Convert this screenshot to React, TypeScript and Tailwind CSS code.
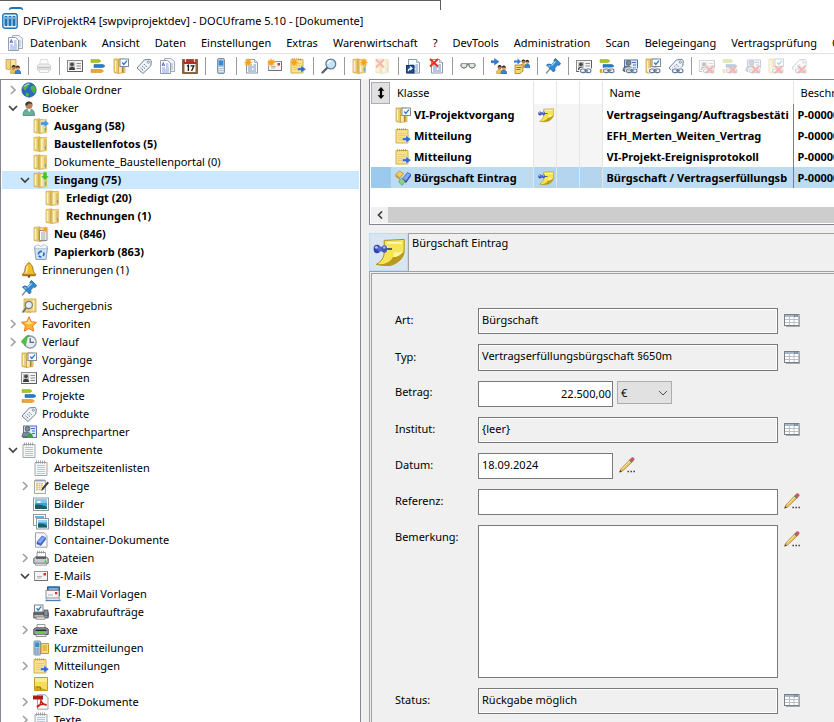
import type { ReactNode } from "react";

type IconProps = { name: string; faded?: boolean; size?: string };

// Base shapes, all on a 16x16 grid

const folder = (
  <>
    <path d="M1 1.500 7 .8V15.500L1 14.500z" fill="#e8ca72" stroke="#c9a548" strokeWidth=".7" />
    <path d="M7 1.500h6.500v13l-6.500 1z" fill="#f1d986" stroke="#cfae55" strokeWidth=".7" />
    <path d="M2.500 2.500v11M8.700 3v11" stroke="#fbf2c8" strokeWidth="1.600" />
    <path d="M5.500 2v12.500M12 3v6" stroke="#d5b04e" strokeWidth="1.200" />
    <path d="M12.300 9.500v4" stroke="#5aa5dc" strokeWidth="1.300" />
  </>
);

const star = (
  <path d="m11.5 0 .9 2.3L14.800 1.400l-.9 2.2 2.100.9-2.100.9.9 2.200-2.300-.9-.9 2.100-.9-2.100-2.300.9.9-2.200L7.600 4.500l2.100-.9-.9-2.200 2.300.9z" fill="#f9a11b" stroke="#fbd27a" strokeWidth=".4" />
);

const starLeft = <g transform="translate(-7.500 0)">{star}</g>;

const link = (
  <g fill="none" stroke="#fff" strokeWidth="2.800">
    <rect x="4.500" y="11" width="5.500" height="3.600" rx="1.800" />
    <rect x="9.500" y="11" width="5.500" height="3.600" rx="1.800" />
    <g stroke="#5f7796" strokeWidth="1.200">
      <rect x="4.500" y="11" width="5.500" height="3.600" rx="1.800" />
      <rect x="9.500" y="11" width="5.500" height="3.600" rx="1.800" />
      <path d="M8 12.800h4" />
    </g>
  </g>
);

const cross = <path d="m7 8 7.500 7M14.500 8 7 15" stroke="#e8301c" strokeWidth="2.200" fill="none" />;

const card = (
  <>
    <rect x=".5" y="2.500" width="15" height="11" fill="#f3f3f3" stroke="#8b8b8b" />
    <path d="M.5 13.500h15v-11" stroke="#5e5e5e" fill="none" />
    <rect x="2" y="4" width="6" height="8" fill="#c4c4c4" />
    <circle cx="5" cy="6.300" r="1.900" fill="#4b4b4b" />
    <path d="M2 12c0-2.600 1.400-3.300 3-3.300S8 9.400 8 12z" fill="#3d3d3d" />
    <path d="M9.500 5.500H14M9.500 8H14M9.500 10.500H14" stroke="#8f8f8f" />
  </>
);

const bars = (
  <>
    <path d="M1 1.500h8l2 1.500-2 1.500H1z" fill="#a5c71f" stroke="#8aa619" strokeWidth=".5" />
    <path d="M4 6.500h9L15 8l-2 1.500H4z" fill="#1f7ccb" stroke="#15609f" strokeWidth=".5" />
    <path d="M1 11.500h10.500l2 1.500-2 1.500H1z" fill="#eda33a" stroke="#c9811f" strokeWidth=".5" />
  </>
);

const folderCheck = (
  <>
    <path d="M1 1h4.500v14.500L1 14.500z" fill="#e8ca72" stroke="#c49b3c" strokeWidth=".7" />
    <path d="M5.500 1H12v13.500l-6.500 1z" fill="#f3dc8d" stroke="#c49b3c" strokeWidth=".7" />
    <path d="M2.500 2.500v11M7 9v5.500" stroke="#fbf2c8" strokeWidth="1.300" />
    <path d="M9.800 9v5.500" stroke="#a07a2c" strokeWidth="1.400" />
    <rect x="7" y="1" width="8.500" height="7.500" fill="#fff" stroke="#7c8b98" />
    <path d="m9.300 4.500 1.500 1.900L14 2.600" stroke="#1f7ccb" strokeWidth="1.300" fill="none" />
  </>
);

const tag = (
  <>
    <path d="M1 10 8.500 1.800 14 1.500l1.300 1.200-.5 5.200L7 15.500z" fill="#f1f5f9" stroke="#6d8093" strokeLinejoin="round" />
    <circle cx="12.300" cy="4.200" r="1.100" fill="#fff" stroke="#6d8093" strokeWidth=".8" />
    <path d="m4.500 9.800 3 2.800M6.200 8l3 2.800M8 6.200 10.800 9" stroke="#5a6a7b" strokeDasharray="1.500 .7" />
  </>
);

const sheet = (
  <>
    <path d="M2.500 1.500h8l3 3v10.500h-11z" fill="#fafcff" stroke="#8d97a5" />
    <path d="M10.500 1.500v3h3" fill="#dfe6ef" stroke="#8d97a5" strokeWidth=".7" />
    <path d="M4 7h4M9.500 7H12M4 9h8M4 11h4M9.500 11H12M4 13h8" stroke="#6f8fc8" />
  </>
);

const docs = (
  <>
    <path d="M5.500.5H12l3.500 3v10h-10z" fill="#f2f4f7" stroke="#a5adb8" />
    <path d="M1.500 2.500h7l3 2.500v10.500h-10z" fill="#fdfdff" stroke="#929baa" />
    <path d="m3 8 1.300-3.500L5.600 8M3.500 7h1.700" stroke="#4d5fc0" strokeWidth=".9" fill="none" />
    <path d="M7 6h2.500M7 8h2.500M3 10h3M7 10h3M3 12h7M3 14h7" stroke="#7895cc" strokeWidth=".9" />
    <path d="M13 5v7" stroke="#9db3dc" />
  </>
);

const pad = (
  <>
    <path d="M2 2.500h12v13H2z" fill="#f4f5f5" stroke="#a4a9ad" />
    <path d="M3.500 .5v3M5.500 .5v3M7.500 .5v3M9.500 .5v3M11.500 .5v3" stroke="#8a8f93" strokeWidth=".8" />
    <path d="M4 5.500h8M4 7.500h8M4 9.500h8M4 11.500h8M4 13.500h8" stroke="#b3c9d8" />
  </>
);

const note = (
  <>
    <path d="M1 1.500h12v13.500H1z" fill="#f8e28c" stroke="#d2ae43" />
    <path d="M2.500 .3v2M4.500 .3v2M6.500 .3v2M8.500 .3v2M10.500 .3v2" stroke="#b0913c" strokeWidth=".8" />
    <path d="M3 5.500h8M3 7.500h8M3 9.500h4M3 11.500h4" stroke="#e6cc78" />
    <path d="M7.500 9.800H11V7.300L16 11.200 11 15v-2.500H7.500z" fill="#2f6bd0" stroke="#fff" strokeWidth=".4" />
  </>
);

const mail = (
  <>
    <rect x="1.500" y="3.500" width="13" height="9" fill="#f4f4f4" stroke="#979797" />
    <path d="M1.500 12.500h13v-9" stroke="#707070" fill="none" />
    <rect x="10.500" y="5" width="2.500" height="2.500" fill="#d8342a" />
    <path d="M4 8.500h5M4 10h4" stroke="#b5b5b5" />
  </>
);

const people = (
  <>
    <circle cx="7" cy="8" r="2.300" fill="#b87a4a" />
    <path d="M4.500 8c0-4 5-4 5 0-1-1.500-3-2-5 0z" fill="#22180f" />
    <path d="M3 15c0-4 2-4.700 4-4.700s3 1 3 4.700z" fill="#edc34d" stroke="#a5771d" strokeWidth=".5" />
    <circle cx="12" cy="8.800" r="2.200" fill="#d79a68" />
    <path d="M9.500 8.500c0-4 5-4 5 .5-1-1.500-3-2-5-.5z" fill="#33210f" />
    <path d="M8.500 15.700c0-4 1.700-4.700 3.500-4.700s3.700.7 3.700 4.700z" fill="#3c82da" stroke="#20589f" strokeWidth=".5" />
  </>
);

const printer = (
  <>
    <path d="M4.500 1.500h7l1 6h-9z" fill="#fafafa" stroke="#a0a0a0" />
    <path d="M1.500 7.500 3 6h10l1.500 1.500V12h-13z" fill="#cfd2d4" stroke="#707478" />
    <path d="M2 9.500h12" stroke="#44484c" strokeWidth="1.500" />
    <path d="M3.500 11.500h9v3h-9z" fill="#f0f0f0" stroke="#8b8f93" />
  </>
);

const pin = (
  <>
    <path d="m1 15.500 5-6" stroke="#8996a3" strokeWidth="1.500" />
    <path d="M1.500 7 8.500 14l1.500-1.700-.3-2.400 2.800-2.800 1.700.2L15.600 5.500 10.500.4 9 2l.2 1.900-2.900 2.700L3.500 6z" fill="#3488cf" stroke="#19619f" strokeWidth=".8" strokeLinejoin="round" />
    <path d="m6.500 7.500 4-4M3.500 7.500l1.500 1" stroke="#a9d7f7" strokeWidth="1.300" />
  </>
);

const contact = (
  <>
    <rect x="2.500" y="2" width="13" height="11.500" fill="#dce9f8" stroke="#5775a5" />
    <path d="M10 4.500h4M11 7h3M11 9.500h3" stroke="#4877be" />
    <circle cx="6.500" cy="4.800" r="2.500" fill="#7e8992" stroke="#434b52" strokeWidth=".6" />
    <path d="M1 13c0-4 2-5 4.500-5S10 9 10 13z" fill="#7b8b98" stroke="#35424d" strokeWidth=".6" />
    <path d="M6 14c0-3 1.500-4.500 3.500-4.500 1.700 0 2.500 1.500 2.500 4.500z" fill="#3e9f42" />
  </>
);

const stickyPin = (
  <>
    <path d="M5.600 2.200 15.600 1.700V7.500c-.2 3-2 5-5 6.500-2.700 1.200-5.500.8-9 .2C4.300 12.800 5.600 10.500 5.600 8z" fill="#f6e456" stroke="#a8901e" strokeWidth=".5" />
    <path d="M15.600 7c-.2 3.500-2 5.500-5 7-2.700 1.200-5.500.8-9 .2 4.200.2 7-1 8.400-3.700 2 .3 4-.9 5.600-3.500z" fill="#b89a1c" />
    <path d="M15.300 7.500c-1.500 2-3.300 3-5.300 2.800.5-.8.700-1.500.6-2.300 1.700.3 3.200 0 4.700-.5z" fill="#fdf6a4" />
    <path d="M7 3.400h7.500M7 5v2.500" stroke="#fff9bb" strokeWidth=".9" />
    <path d="M6.500 6.500H9.500" stroke="#3b4a86" strokeWidth=".9" />
    <ellipse cx="2" cy="6.500" rx="1.700" ry="2.100" fill="#2f44ac" />
    <ellipse cx="3.700" cy="6.500" rx="1.500" ry="1.300" fill="#5168d0" />
    <ellipse cx="5.700" cy="6.500" rx="1.400" ry="1.900" fill="#4058c4" />
    <ellipse cx="1.700" cy="5.700" rx=".8" ry=".7" fill="#b3c0f8" />
    <ellipse cx="5.600" cy="5.700" rx=".6" ry=".6" fill="#b3c0f8" />
  </>
);

const icons: Record<string, ReactNode> = {
  folder,
  card,
  bars,
  folderCheck,
  tag,
  docs,
  pad,
  note,
  mail,
  pin,
  contact,
  stickyPin,
  printer,
  logo: (
    <>
      <rect x=".8" y=".8" width="14.400" height="14.400" rx="2" fill="#e3f1fa" stroke="#1e73b4" strokeWidth="1.400" />
      <g fill="#1e73b4">
        <rect x="2.500" y="3" width="3" height="10" rx=".8" />
        <rect x="6.500" y="3" width="3" height="10" rx=".8" />
        <rect x="10.500" y="3" width="3" height="10" rx=".8" />
      </g>
      <path d="M4 4v2M8 4v2M12 4v2" stroke="#cde5f5" />
    </>
  ),
  users: (
    <>
      <path d="M1 1.500h4.500V12L1 11z" fill="#efd279" stroke="#c49b3c" strokeWidth=".7" />
      <path d="M5.500 1.500H11v9.500H5.500z" fill="#f7e6a4" stroke="#c49b3c" strokeWidth=".7" />
      <g transform="translate(2.800 2.800) scale(.84)">{people}</g>
    </>
  ),
  calendar: (
    <>
      <rect x=".7" y="1.700" width="14.600" height="13.600" fill="#9b6b41" stroke="#6d4526" />
      <path d="M1.500 2.500h13V6h-13z" fill="#b92b24" />
      <path d="M3.500 1v3M12.500 1v3" stroke="#f1e0c8" strokeWidth="1.200" />
      <path d="M2.500 6h11v8h-11z" fill="#fbfbfb" />
      <path d="m5 8.200 1.400-.9V13M8.500 7.800h3.300L9.600 13" stroke="#1a1a1a" strokeWidth="1.300" fill="none" />
    </>
  ),
  phone: (
    <>
      <rect x="4.500" y=".5" width="7" height="15" rx="1.500" fill="#b5c9da" stroke="#7d92a5" />
      <rect x="5.700" y="2.500" width="4.600" height="5" fill="#2d8fdc" />
      <path d="M5.700 9.500h4.600M5.700 11.500h4.600M5.700 13.500h4.600" stroke="#fff" strokeDasharray="1 .8" />
    </>
  ),
  newDoc: <>{sheet}{starLeft}</>,
  newMail: <>{mail}{starLeft}</>,
  newNote: <>{note}{starLeft}</>,
  search: (
    <>
      <path d="M1.500 14.500 6.500 9.500" stroke="#5d6268" strokeWidth="2.400" strokeLinecap="round" />
      <circle cx="9.800" cy="6" r="4.900" fill="#c6e3f7" stroke="#5f7c97" strokeWidth="1.300" />
      <path d="M6.800 6c0-2 1.300-3 3-3" stroke="#fff" strokeWidth="1.300" fill="none" />
    </>
  ),
  folderNew: <>{folder}{star}</>,
  folderCross: <>{folder}<path d="m1 1.500 8 8M9 1.500l-8 8" stroke="#e8301c" strokeWidth="2" /></>,
  docLink: (
    <>
      {sheet}
      <rect x=".5" y="7.500" width="7.500" height="7.500" fill="#1f4c97" stroke="#153769" />
      <path d="M2.300 13.200c0-2 .8-2.900 3.200-2.900M4 8.500l2 1.800-2 1.800" stroke="#fff" strokeWidth="1.200" fill="none" />
    </>
  ),
  docCross: (
    <>
      {sheet}
      <path d="m1 1 8 7.500M9 1 1 8.500" stroke="#e8301c" strokeWidth="2" />
    </>
  ),
  glasses: (
    <>
      <path d="M1 6h14" stroke="#5d6965" strokeWidth="1.300" />
      <path d="M1 6v2.500L3 10h2l2-1.500V6M9 6v2.500L11 10h2l2-1.500V6" fill="#dbe6dc" stroke="#56625e" />
    </>
  ),
  arrowUsers: (
    <>
      <g transform="translate(2.800 2.800) scale(.84)">{people}</g>
      <path d="M0 2.700h3.500V.5L8 3.700 3.500 6.900V4.700H0z" fill="#2f7bdc" stroke="#1d539b" strokeWidth=".4" />
    </>
  ),
  docUsers: (
    <>
      <g transform="translate(4 -2.500) scale(.78)">{people}</g>
      <path d="M1 7h8v6l-3 2.500H1z" fill="#f4d976" stroke="#9c7c26" strokeWidth=".8" />
      <path d="M2.500 9.500h5M2.500 11.500h4" stroke="#9c7c26" />
      <path d="M0 2.500h3.500V.5L7 3.500l-3.500 3v-2H0z" fill="#2f7bdc" />
    </>
  ),
  cardLink: <>{card}{link}</>,
  barsLink: <>{bars}{link}</>,
  contactLink: <>{contact}{link}</>,
  folderLink: <>{folderCheck}{link}</>,
  tagLink: <>{tag}{link}</>,
  cardCross: <>{card}{link}{cross}</>,
  barsCross: <>{bars}{link}{cross}</>,
  contactCross: <>{contact}{link}{cross}</>,
  folderCheckCross: <>{folderCheck}{link}{cross}</>,
  tagCross: <>{tag}{link}{cross}</>,
  globe: (
    <>
      <circle cx="8" cy="8" r="7.200" fill="#2767cf" stroke="#1a459a" strokeWidth=".6" />
      <path d="M2 5C3.500 2 6 1 8.500 1.200 9 3 7 4 6.500 5.500 5 6 5.500 8 4 8.500 3 8 2.500 7 2 5zM10 4c2-1 3.500-.5 4.300 1 .8 2.500.5 5-1.300 6.500-1.500-.5-1-2.500-2.500-3C9 7.500 9 5 10 4zM5 10.500c2 0 3.500 1 3 2.500L7 15c-2-.5-3-2-2-4.500z" fill="#4fb33c" />
      <path d="M3.500 4.500C5 2.500 7 2 8.500 2" stroke="#b5e0f7" strokeWidth="1.200" fill="none" />
    </>
  ),
  person: (
    <>
      <path d="M2 15.500c0-5 2.500-6.500 6-6.500s5.500 1.500 5.500 6.500z" fill="#6aae9c" stroke="#3c7b6b" strokeWidth=".7" />
      <path d="m6.500 9 1.700 3.500L10 9z" fill="#f4f4f4" />
      <circle cx="8" cy="5.300" r="3.500" fill="#b8835a" />
      <path d="M4.500 5.500C3.500.2 12 0 11.500 5c-1-1.800-2.800-1.800-4.300-1.300C6.700 5 5.500 5.500 4.500 5.500z" fill="#40342c" />
    </>
  ),
  folderOut: <>{folder}<path d="M7.500 3.800h4V1.500L16 5.500l-4.500 4V7.200h-4z" fill="#3d9ae2" stroke="#fff" strokeWidth=".4" /></>,
  folderIn: <>{folder}<path d="M10 0h4v4h2.200L12 8.500 7.800 4H10z" fill="#45bf33" stroke="#fff" strokeWidth=".4" /></>,
  folderDoc: (
    <>
      {folder}
      <path d="M6.500 4.500H14v10H6.500z" fill="#fff" stroke="#8d8d8d" />
      <path d="M8 7h4.500M8 9h4.500M8 11h4.500M8 13h4.500" stroke="#9a9a9a" />
      <g transform="translate(3 0) scale(.8)">{star}</g>
    </>
  ),
  bin: (
    <>
      <path d="M1.500 3.500h13L13 15.500H3z" fill="#d3e3f1" stroke="#8ba2b6" />
      <path d="M1 3 4.500.8l3.500 1.500L11.500.6 15 3l-2.500 1.700h-9z" fill="#f5f8fb" stroke="#9aacbb" strokeWidth=".7" />
      <path d="M5.500 10.500a2.700 2.700 0 0 1 3.500-3M10.500 8.500a2.700 2.700 0 0 1-.5 3.500M8.500 13a2.700 2.700 0 0 1-2.700-1.200" stroke="#2468c4" strokeWidth="1.600" fill="none" />
    </>
  ),
  bell: (
    <>
      <path d="M8 .8c1.200 0 1.600.8 1.500 1.500C12.500 3.500 11.500 8 13 10.500l2 2.300H1l2-2.300C4.500 8 3.500 3.500 6.500 2.300 6.400 1.600 6.800.8 8 .8z" fill="#f2bf2c" stroke="#8f6209" strokeWidth=".8" />
      <path d="M6.500 4C5.500 6 6 9 5 11" stroke="#fff0a2" strokeWidth="1.400" fill="none" />
      <path d="M1.500 12.800h13v1.400h-13z" fill="#aa7610" />
      <circle cx="8" cy="14.600" r="1.200" fill="#6b4908" />
    </>
  ),
  searchFolder: (
    <>
      <path d="M3 1h12v13H3z" fill="#f0d27c" stroke="#cba44a" strokeWidth=".8" />
      <path d="M12.500 2v11" stroke="#fbf0c2" strokeWidth="1.300" />
      <path d="m1.500 14.500 4-5" stroke="#6e6e6e" strokeWidth="1.800" />
      <circle cx="7.800" cy="7" r="3.600" fill="#e4eff5" stroke="#747c82" strokeWidth="1.200" />
      <path d="m6 15 2-1.500 2 1.500" stroke="#cba44a" fill="none" />
    </>
  ),
  favorite: (
    <>
      <path d="m8 .8 2.200 4.900 5.300.6-3.900 3.600 1.100 5.300L8 12.500l-4.700 2.700 1.100-5.300L.5 6.300l5.300-.6z" fill="#fdb42c" stroke="#e0701a" strokeWidth=".9" strokeLinejoin="round" />
      <path d="m8 2.800 1.500 3.500 3 .5L8 8.500 3.500 6.800l3-.5z" fill="#ffe28a" />
    </>
  ),
  history: (
    <>
      <circle cx="9.200" cy="8" r="6" fill="#e6edf2" stroke="#8d9ca8" strokeWidth="1.300" />
      <path d="M9.200 4v4.300H13" stroke="#5a6a77" strokeWidth="1.200" fill="none" />
      <path d="m0 7.500 4-4.300c1.200-1.500 2.800-2 4.500-2C6.500 2.500 5.700 4.500 5.500 7.500L4.300 12z" fill="#54c043" stroke="#2f8a28" strokeWidth=".4" />
    </>
  ),
  receipt: (
    <>
      <path d="M1.500 2.500h11v13h-11z" fill="#f7f8f8" stroke="#a4a9ad" />
      <path d="M3 .8v3M5 .8v3M7 .8v3M9 .8v3M11 .8v3" stroke="#8f8f8f" strokeWidth=".8" />
      <path d="M3 5.500h7M3 7.500h7M3 9.500h6M3 11.500h5" stroke="#e5c83c" strokeWidth="1.300" strokeDasharray="2 .6" />
      <path d="m8 13 1-3 5.500-6.500L16 5l-5.500 6.500z" fill="#3f3f3f" />
    </>
  ),
  picture: (
    <>
      <rect x=".5" y="2" width="15" height="12.500" fill="#fff" stroke="#8f9aa5" />
      <path d="M2 3.500h12V13H2z" fill="#3aa0dc" />
      <path d="M2 3.500h12V7H2z" fill="#86c8ec" />
      <path d="M2 9c4-1 7 0 12 2v2H2z" fill="#1d5e63" />
      <ellipse cx="6" cy="6" rx="2" ry="1" fill="#fff" />
    </>
  ),
  pictures: (
    <>
      <rect x=".5" y=".5" width="12" height="11" fill="#fff" stroke="#8f9aa5" />
      <path d="M2 2h9v2H2z" fill="#62b4e2" />
      <rect x="3.500" y="4.500" width="12" height="10.500" fill="#fff" stroke="#8f9aa5" />
      <path d="M5 6h9v7.500H5z" fill="#3aa0dc" />
      <path d="M5 6h9v2.500H5z" fill="#9bd2ef" />
      <path d="M5 10c3-1 6 0 9 1.500v2H5z" fill="#1d5e63" />
    </>
  ),
  container: (
    <>
      <path d="M2.500.8h8.500l3 3v11.400H2.500z" fill="#f7f8fb" stroke="#9aa2af" />
      <path d="m4 10 5-6 3.500 1.500v2L8 13.500 4 12z" fill="#3d66cc" stroke="#2949a0" strokeWidth=".5" />
      <path d="m4.500 10 4.700-5.500 3 1.200-4.700 5.800z" fill="#84a4ee" />
    </>
  ),
  files: (
    <>
      <path d="M4 2.500h8.500v6H4z" fill="#fff" stroke="#9c9c9c" />
      <path d="M4.500 .8v2.500M6.500 .8v2.500M8.500 .8v2.500M10.500 .8v2.500" stroke="#8f8f8f" strokeWidth=".8" />
      <path d="M.8 8.500 3 6.800h10l2.200 1.700v4.800H.8z" fill="#c9cccf" stroke="#63676b" />
      <path d="M3 8h10" stroke="#393d41" strokeWidth="1.400" />
      <path d="M12.500 10.500v2" stroke="#47bd36" strokeWidth="1.500" />
      <path d="M2.500 13.300h11v1.900h-11z" fill="#eee" stroke="#85898d" strokeWidth=".8" />
    </>
  ),
  mailTemplate: (
    <>
      <path d="M2.500.8h12v9h-12z" fill="#3a7fbd" stroke="#28608f" />
      <path d="M4 3h9" stroke="#b8d9f2" />
      <rect x="1" y="4.500" width="13" height="7.500" fill="#f6f6f6" stroke="#8f8f8f" />
      <rect x="10" y="6" width="2.300" height="2.300" fill="#d8342a" />
      <path d="M3 9h5" stroke="#b0b0b0" />
      <path d="M.5 14.500h15" stroke="#4c7fae" strokeWidth="1.400" />
      <path d="m1 12 1 2M14 12l1 2" stroke="#8fa8bd" />
    </>
  ),
  faxCheck: (
    <>
      <path d="M.8 8.500h14.400v5.300H.8z" fill="#b9bdc0" stroke="#44494d" />
      <path d="M1 10h13" stroke="#33373b" strokeWidth="1.300" />
      <rect x="1.500" y="1" width="8.500" height="7" fill="#fff" stroke="#7a838c" />
      <path d="m3.500 4.300 1.700 1.900 3-3.700" stroke="#1f7ccb" strokeWidth="1.300" fill="none" />
      <path d="M11 6h4v6h-4z" fill="#8b9094" stroke="#44494d" strokeWidth=".7" />
      <path d="M3 13h9v2.200H3z" fill="#f2f2f2" stroke="#777" strokeWidth=".8" />
    </>
  ),
  fax: (
    <>
      <path d="M4 2.500h8V7H4z" fill="#fff" stroke="#9c9c9c" />
      <path d="M.8 7 3 5.800h10L15.200 7v5.500H.8z" fill="#9ba0a3" stroke="#4c5155" />
      <path d="M2.500 8.300h11" stroke="#2d3134" strokeWidth="1.600" />
      <path d="M5 10.400h6" stroke="#4fdc35" strokeWidth="1.500" />
      <path d="M3 12.500h10v2H3z" fill="#f2f2f2" stroke="#777" strokeWidth=".8" />
    </>
  ),
  sms: (
    <>
      <rect x="1" y="1" width="6.500" height="14" rx="1" fill="#b5c9da" stroke="#7d92a5" />
      <path d="M2.200 2.500h4V7h-4z" fill="#2d8fdc" />
      <path d="M2.200 9h4M2.200 11h4M2.200 13h4" stroke="#5f7f9c" strokeDasharray="1 .6" />
      <path d="M8 3.500h7.500v10H8z" fill="#f7dc78" stroke="#c79a2c" />
      <path d="M9.500 6h4.500M9.500 8h4.500M9.500 10h4.500" stroke="#c79a2c" />
    </>
  ),
  sticky: (
    <>
      <path d="M1.500 1.500h13v13h-13z" fill="#f8dc58" stroke="#c99c1f" />
      <path d="M2 2h12v4H2z" fill="#fbec94" />
      <path d="M2 10c2 .5 4 0 5.500 1.500 1.500 1 4 1.500 6.500 2.500H2z" fill="#d9a520" />
      <path d="M3.500 11h4v2.500" stroke="#8b650b" strokeWidth=".8" fill="none" />
    </>
  ),
  pdf: (
    <>
      <path d="M4.500.8h7.500l3 3v11.400H4.500z" fill="#fafafa" stroke="#a3a3a3" />
      <path d="M0 1.500h10v4H0z" fill="#b01916" />
      <path d="M7.800 4.500c1 4-1.300 8-3 8.300C3 12.500 7 9.700 13 10.500c1 1-2 1-5.200-3.500" stroke="#c9201c" strokeWidth="1.500" fill="none" />
    </>
  ),
  entry: (
    <>
      <path d="m.5 4.500 4-3.500L8.500 3.500 4.800 8z" fill="#f3cd5b" stroke="#a57c1c" strokeWidth=".6" />
      <path d="m.5 4.500 4.300 3.500v2L.5 6.500z" fill="#c4962e" />
      <path d="m7.500 8.500 5-6L16 4.300l-5 6.700z" fill="#8aa5ee" stroke="#2d4ba5" strokeWidth=".6" />
      <path d="m7.500 8.500 3.500 2.500 5-6.700V6l-5 7-3.500-2.500z" fill="#2d4ba5" />
      <path d="m4 10.500 2.500-2 3.500 2.500-2.700 4.300L4.500 13z" fill="#8fd08c" stroke="#4b914a" strokeWidth=".6" />
    </>
  ),
  grid: (
    <>
      <path d="M2 14.500h14v-11" stroke="#a7abad" fill="none" />
      <rect x=".5" y="2.500" width="14.500" height="11" fill="#fff" stroke="#768087" />
      <path d="M1 3h13.500v2H1z" fill="#a8b6c7" />
      <path d="M10 4h4" stroke="#3d5578" strokeDasharray="1 .6" />
      <path d="M1 7.500h13.500M1 10.500h13.500M5.500 5v8M10 5v8" stroke="#bcc0c2" />
    </>
  ),
  pencil: (
    <>
      <path d="m.5 15.300 1.300-3.300L11.500 2 13.800 4.300 4 13.800z" fill="#f1bf55" stroke="#96703a" strokeWidth=".6" />
      <path d="m3.500 11.500 8-8" stroke="#fdeb9c" strokeWidth="1" />
      <path d="m11.300 2.300 1.300-1.500c1.500-.8 3.200.8 2.500 2L13.600 4.600z" fill="#d9536a" stroke="#993c4c" strokeWidth=".4" />
      <path d="m10.600 2.900 2.400 2.300" stroke="#487f6e" strokeWidth="1.200" />
      <path d="m.5 15.300.8-2L2.800 14.500z" fill="#33261a" />
      <path d="M8.500 14.500H16" stroke="#222" strokeWidth="1.300" strokeDasharray="1.300 1.700" />
    </>
  ),
  sort: <path d="M8 0 3.500 5H6.500v6h-3L8 16l4.500-5h-3V5h3z" fill="#000" />,
};

const Icon = ({ name, faded, size = "size-4" }: IconProps) => (
  <svg viewBox="0 0 16 16" className={`${size} shrink-0 ${faded ? "opacity-35" : ""}`} aria-hidden="true">
    {icons[name]}
  </svg>
);

const Chevron = ({ open }: { open?: boolean }) => (
  <svg viewBox="0 0 10 10" className="size-[10px]" fill="none" strokeWidth="1.700" aria-hidden="true">
    {open ? <path d="m1 3 4 4 4-4" stroke="#404040" /> : <path d="m3 1 4 4-4 4" stroke="#a3a3a3" />}
  </svg>
);

const menu = [
  "Datenbank", "Ansicht", "Daten", "Einstellungen", "Extras", "Warenwirtschaft", "?",
  "DevTools", "Administration", "Scan", "Belegeingang", "Vertragsprüfung", "O",
];

// "|" is a separator, a leading "-" marks a disabled button
const toolbar = [
  "users", "|", "-printer", "|", "card", "bars", "folderCheck", "tag", "docs", "calendar", "|",
  "phone", "|", "newDoc", "newMail", "newNote", "|", "search", "|", "folderNew", "-folderCross", "|",
  "docLink", "docCross", "|", "glasses", "|", "arrowUsers", "docUsers", "|", "pin", "|",
  "cardLink", "barsLink", "contactLink", "folderLink", "tagLink", "|",
  "-cardCross", "-barsCross", "-contactCross", "-folderCheckCross", "-tagCross",
];

type Node = { label: string; icon: string; level?: number; state?: "open" | "closed"; bold?: boolean; selected?: boolean };

const tree: Node[] = [
  { label: "Globale Ordner", icon: "globe", state: "closed" },
  { label: "Boeker", icon: "person", state: "open" },
  { label: "Ausgang (58)", icon: "folderOut", level: 1, bold: true },
  { label: "Baustellenfotos (5)", icon: "folder", level: 1, bold: true },
  { label: "Dokumente_Baustellenportal (0)", icon: "folder", level: 1 },
  { label: "Eingang (75)", icon: "folderIn", level: 1, state: "open", bold: true, selected: true },
  { label: "Erledigt (20)", icon: "folder", level: 2, bold: true },
  { label: "Rechnungen (1)", icon: "folder", level: 2, bold: true },
  { label: "Neu (846)", icon: "folderDoc", level: 1, bold: true },
  { label: "Papierkorb (863)", icon: "bin", level: 1, bold: true },
  { label: "Erinnerungen (1)", icon: "bell" },
  { label: "", icon: "pin" },
  { label: "Suchergebnis", icon: "searchFolder" },
  { label: "Favoriten", icon: "favorite", state: "closed" },
  { label: "Verlauf", icon: "history", state: "closed" },
  { label: "Vorgänge", icon: "folderCheck" },
  { label: "Adressen", icon: "card" },
  { label: "Projekte", icon: "bars" },
  { label: "Produkte", icon: "tag" },
  { label: "Ansprechpartner", icon: "contact" },
  { label: "Dokumente", icon: "pad", state: "open" },
  { label: "Arbeitszeitenlisten", icon: "pad", level: 1 },
  { label: "Belege", icon: "receipt", level: 1, state: "closed" },
  { label: "Bilder", icon: "picture", level: 1 },
  { label: "Bildstapel", icon: "pictures", level: 1 },
  { label: "Container-Dokumente", icon: "container", level: 1 },
  { label: "Dateien", icon: "files", level: 1, state: "closed" },
  { label: "E-Mails", icon: "mail", level: 1, state: "open" },
  { label: "E-Mail Vorlagen", icon: "mailTemplate", level: 2 },
  { label: "Faxabrufaufträge", icon: "faxCheck", level: 1 },
  { label: "Faxe", icon: "fax", level: 1, state: "closed" },
  { label: "Kurzmitteilungen", icon: "sms", level: 1 },
  { label: "Mitteilungen", icon: "note", level: 1, state: "closed" },
  { label: "Notizen", icon: "sticky", level: 1 },
  { label: "PDF-Dokumente", icon: "pdf", level: 1, state: "closed" },
  { label: "Texte", icon: "pad", level: 1, state: "closed" },
];

const indents = ["pl-[6px]", "pl-[18px]", "pl-[30px]"];

const rows = [
  { icon: "folderCheck", type: "VI-Projektvorgang", name: "Vertragseingang/Auftragsbestäti", pinned: true },
  { icon: "note", type: "Mitteilung", name: "EFH_Merten_Weiten_Vertrag" },
  { icon: "note", type: "Mitteilung", name: "VI-Projekt-Ereignisprotokoll" },
  { icon: "entry", type: "Bürgschaft Eintrag", name: "Bürgschaft / Vertragserfüllungsb", pinned: true, selected: true },
];

const TitleBar = () => (
  <header className="shrink-0 bg-white">
    <div className="h-[10px] w-[441px] border-t border-r border-[#5f5f5f] pl-[9px] pt-[6px]">
      <div className="h-[3px] w-[14px] rounded-t border-x border-t-2 border-[#1e73b4]" />
    </div>
    <div className="flex h-[22px] items-center gap-[5px] pl-[2px]">
      <Icon name="logo" />
      <h1>DFViProjektR4 [swpviprojektdev] - DOCUframe 5.10 - [Dokumente]</h1>
    </div>
    <nav className="flex h-[21px] items-center pl-[7px]">
      <Icon name="docs" />
      <div className="flex gap-[15px] pl-[7px]">
        {menu.map((item) => (
          <button key={item} type="button">{item}</button>
        ))}
      </div>
    </nav>
  </header>
);

const Toolbar = () => (
  <div className="flex h-[26px] shrink-0 items-center gap-[7px] border-t border-[#e3e3e3] bg-white pb-px pl-[5px]" role="toolbar">
    {toolbar.map((item, i) => {
      if (item === "|") return <span key={i} className="h-[18px] w-px shrink-0 bg-[#9a9a9a]" />;
      const faded = item.startsWith("-");
      const name = faded ? item.slice(1) : item;
      return (
        <button key={i} type="button" disabled={faded} aria-label={name}>
          <Icon name={name} faded={faded} />
        </button>
      );
    })}
  </div>
);

const Tree = () => (
  <aside className="w-[361px] shrink-0 overflow-hidden border-x border-t border-[#828790] bg-white pt-px">
    <ul className="px-px">
      {tree.map((node, i) => (
        <li key={i} className={`flex h-[18px] items-center ${indents[node.level ?? 0]} ${node.selected ? "bg-[#cce8ff]" : ""}`}>
          <span className="flex w-[13px] shrink-0">
            {node.state && (
              <button type="button" aria-label={node.state}>
                <Chevron open={node.state === "open"} />
              </button>
            )}
          </span>
          <Icon name={node.icon} />
          <span className={`pl-[5px] ${node.bold ? "font-bold" : ""}`}>{node.label}</span>
        </li>
      ))}
    </ul>
  </aside>
);

const DocumentList = () => (
  <section className="overflow-hidden border-y border-l border-[#828790] bg-white pl-px pt-px">
    <div className="overflow-hidden">
      <table className="w-[640px] table-fixed border-collapse text-left whitespace-nowrap">
        <colgroup>
          <col className="w-[20px]" />
          <col className="w-[142px]" />
          <col className="w-[23px]" />
          <col className="w-[23px]" />
          <col className="w-[23px]" />
          <col className="w-[191px]" />
          <col />
        </colgroup>
        <thead>
          <tr className="h-[23px]">
            <th className="p-0">
              <button type="button" aria-label="Sortierung" className="flex h-[22px] w-[19px] items-center justify-center border border-[#adadad] bg-[#e1e1e1]">
                <Icon name="sort" size="size-3" />
              </button>
            </th>
            <th className="border-r border-[#e5e5e5] p-0 pl-[6px] font-normal">Klasse</th>
            <th className="border-r border-[#e5e5e5] p-0" />
            <th className="border-r border-[#e5e5e5] p-0" />
            <th className="border-r border-[#e5e5e5] p-0" />
            <th className="border-r border-[#e5e5e5] p-0 pl-[7px] font-normal">Name</th>
            <th className="p-0 pl-[7px] font-normal">Beschreibung</th>
          </tr>
        </thead>
        <tbody className="font-bold">
          {rows.map((row, i) => {
            const tint = row.selected ? "bg-[#b5d4ee]" : "bg-[#f5f5f5]";
            return (
              <tr key={i} className={`h-[21px] ${row.selected ? "bg-[#bcdcf4]" : ""}`}>
                <td className={`p-0 ${row.selected ? "bg-[#9cc9ee]" : ""}`} />
                <td className="border-r border-[#e5e5e5] p-0 pl-1">
                  <div className="flex items-center gap-[3px]">
                    <Icon name={row.icon} />
                    {row.type}
                  </div>
                </td>
                <td className={`border-r border-[#e5e5e5] p-0 pl-1 ${tint}`}>{row.pinned && <Icon name="stickyPin" />}</td>
                <td className={`border-r border-[#e5e5e5] p-0 ${tint}`} />
                <td className={`border-r border-[#e5e5e5] p-0 ${tint}`} />
                <td className="border-r border-[#7f7f7f] p-0 pr-[3px] pl-1">
                  <div className="overflow-hidden">{row.name}</div>
                </td>
                <td className="p-0 pl-1">P-00000</td>
              </tr>
            );
          })}
        </tbody>
      </table>
    </div>
    <div className="mt-[19px] mb-px flex h-4 bg-[#cdcdcd]">
      <button type="button" aria-label="Nach links" className="flex w-[17px] items-center justify-center bg-[#f0f0f0]">
        <svg viewBox="0 0 8 8" className="size-2" fill="none" stroke="#404040" strokeWidth="1.700">
          <path d="M6 .5 2.500 4 6 7.500" />
        </svg>
      </button>
    </div>
  </section>
);

type FieldProps = { id: string; label: string; value?: string; lookup?: boolean; narrow?: boolean; tall?: boolean };

const Field = ({ id, label, value, lookup, narrow, tall }: FieldProps) => (
  <div className="flex items-center">
    <label htmlFor={id} className="w-[83px] shrink-0 pb-[2px]">{label}:</label>
    <input
      id={id}
      readOnly={lookup}
      defaultValue={value}
      className={`border border-[#7a7a7a] px-[3px] pb-1 outline-none ${tall ? "h-[27px]" : "h-[26px]"} ${narrow ? "w-[135px]" : "w-[300px]"} ${lookup ? "bg-[#f0f0f0] ring-1 ring-white ring-inset" : "bg-white"}`}
    />
    <button type="button" aria-label={`${label} bearbeiten`} className="ml-[6px] pb-[2px]">
      <Icon name={lookup ? "grid" : "pencil"} />
    </button>
  </div>
);

const DetailForm = () => (
  <form className="min-h-0 flex-1 overflow-hidden border-t border-l border-[#a0a0a0] pt-px pl-px">
    <div className="flex h-full flex-col gap-[10px] border-t border-l border-[#a0a0a0] pt-[34px] pl-[23px]">
      <Field id="art" label="Art" value="Bürgschaft" lookup />
      <Field id="typ" label="Typ" value="Vertragserfüllungsbürgschaft §650m" lookup tall />
      <div className="flex items-start">
        <label htmlFor="betrag" className="w-[83px] shrink-0 pt-[3px]">Betrag:</label>
        <input id="betrag" defaultValue="22.500,00" className="h-[26px] w-[135px] border border-[#7a7a7a] bg-white px-px pb-[2px] text-right outline-none" />
        <div className="relative ml-1">
          <select aria-label="Währung" className="h-[23px] w-[55px] appearance-none border border-[#adadad] bg-[#e1e1e1] pl-[3px]">
            <option>€</option>
          </select>
          <svg viewBox="0 0 10 10" className="pointer-events-none absolute top-[7px] right-1 size-[10px]" fill="none" stroke="#505050">
            <path d="m1 3 4 4 4-4" />
          </svg>
        </div>
      </div>
      <Field id="institut" label="Institut" value="{leer}" lookup />
      <Field id="datum" label="Datum" value="18.09.2024" narrow />
      <Field id="referenz" label="Referenz" />
      <div className="flex items-start">
        <label htmlFor="bemerkung" className="w-[83px] shrink-0 pt-1">Bemerkung:</label>
        <textarea id="bemerkung" className="h-[153px] w-[300px] resize-none border border-[#7a7a7a] bg-white px-[3px] outline-none" />
        <button type="button" aria-label="Bemerkung bearbeiten" className="ml-[6px] pt-[6px]">
          <Icon name="pencil" />
        </button>
      </div>
      <Field id="status" label="Status" value="Rückgabe möglich" lookup />
    </div>
  </form>
);

export default function App() {
  return (
    <div className="flex h-screen flex-col overflow-hidden bg-[#f0f0f0] font-['Noto_Sans','Open_Sans',sans-serif] text-[11px] leading-4 whitespace-nowrap text-black">
      <TitleBar />
      <Toolbar />
      <div className="flex min-h-0 flex-1 gap-2">
        <Tree />
        <main className="flex min-w-0 flex-1 flex-col">
          <DocumentList />
          <div className="mt-2 flex h-[38px] shrink-0">
            <div className="flex w-[39px] items-center justify-center border border-[#bcdcf4] bg-[#d9e6f2]">
              <Icon name="stickyPin" size="size-8" />
            </div>
            <h2 className="flex-1 border-t border-l border-[#a0a0a0] pt-px pl-[3px]">Bürgschaft Eintrag</h2>
          </div>
          <DetailForm />
        </main>
      </div>
    </div>
  );
}
